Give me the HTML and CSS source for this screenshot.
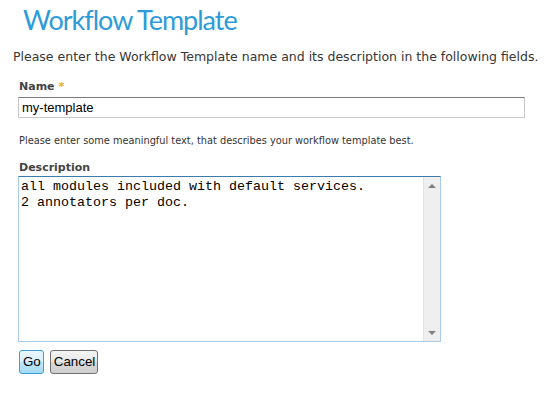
FILE: index.html
```html
<!DOCTYPE html>
<html>
<head>
<meta charset="utf-8">
<link rel="stylesheet" href="styles.css">
</head>
<body>
<div class="page">
  <h1 class="title">Workflow Template</h1>
  <p class="intro">Please enter the Workflow Template name and its description in the following fields.</p>
  <form class="form">
    <label class="label">Name <span class="req">*</span></label>
    <div class="input">my-template</div>
    <p class="hint">Please enter some meaningful text, that describes your workflow template best.</p>
    <label class="label label-desc">Description</label>
    <div class="textarea">
      <div class="ta-text">all modules included with default services.<br>2 annotators per doc.</div>
      <div class="scrollbar">
        <span class="arrow up"></span>
        <span class="arrow down"></span>
      </div>
    </div>
    <div class="buttons">
      <span class="btn btn-go">Go</span>
      <span class="btn">Cancel</span>
    </div>
  </form>
</div>
</body>
</html>
```

FILE: styles.css
```css
html, body {
  margin: 0;
  padding: 0;
  background: #fff;
}
.page {
  padding: 0;
  font-family: "DejaVu Sans", Verdana, sans-serif;
  color: #333;
}
.title {
  margin: 0;
  padding: 4px 0 0 23px;
  font-family: "Lato", "Open Sans", sans-serif;
  font-weight: normal;
  font-size: 27px;
  letter-spacing: -1px;
  line-height: 32px;
  color: #2e9bd9;
}
.intro {
  margin: 14px 0 0 13px;
  font-size: 12.5px;
  line-height: 14px;
  color: #363636;
}
.form {
  display: flex;
  flex-direction: column;
  align-items: flex-start;
  margin: 16px 0 0 18px;
}
.label {
  font-size: 11px;
  line-height: 13px;
  font-weight: bold;
  color: #444;
  padding-left: 1px;
}
.req {
  color: #f5a623;
}
.input {
  box-sizing: border-box;
  width: 507px;
  height: 21px;
  margin-top: 4px;
  border: 1px solid #c8c8c8;
  border-top-color: #7a7a7a;
  padding: 2px 3px;
  font-family: "Liberation Sans", Arial, sans-serif;
  font-size: 13px;
  line-height: 15px;
  color: #000;
}
.hint {
  margin: 17px 0 0 1px;
  font-size: 9.8px;
  line-height: 12px;
  color: #333;
}
.label-desc {
  margin-top: 14px;
}
.textarea {
  box-sizing: border-box;
  display: flex;
  width: 423px;
  height: 166px;
  margin-top: 2px;
  border: 1px solid #a9cbe5;
  border-top-color: #3d7bad;
}
.ta-text {
  flex: 1;
  padding: 2px;
  font-family: "Liberation Mono", "Courier New", monospace;
  font-size: 13.33px;
  line-height: 16px;
  color: #000;
}
.scrollbar {
  width: 16px;
  background: #efefef;
  border-left: 1px solid #e2e2e2;
  display: flex;
  flex-direction: column;
  justify-content: space-between;
  align-items: center;
  padding: 7px 0 6px;
}
.arrow {
  width: 0;
  height: 0;
  border-left: 4px solid transparent;
  border-right: 4px solid transparent;
}
.arrow.up {
  border-bottom: 4px solid #808080;
}
.arrow.down {
  border-top: 4px solid #808080;
}
.buttons {
  display: flex;
  gap: 6px;
  margin-top: 8px;
  margin-left: 1px;
}
.btn {
  box-sizing: border-box;
  height: 24px;
  padding: 0 2px 0 3px;
  border: 1px solid #707070;
  border-radius: 3px;
  background: linear-gradient(#f4f4f4, #e6e6e6 50%, #d8d8d8 51%, #cfcfcf);
  font-family: "Liberation Sans", Arial, sans-serif;
  font-size: 13.33px;
  line-height: 22px;
  color: #000;
}
.btn-go {
  border-color: #3c9fd6;
  background: linear-gradient(#eaf6fd, #d9f0fc 50%, #bee6fd 51%, #a7d9f5);
}
```
